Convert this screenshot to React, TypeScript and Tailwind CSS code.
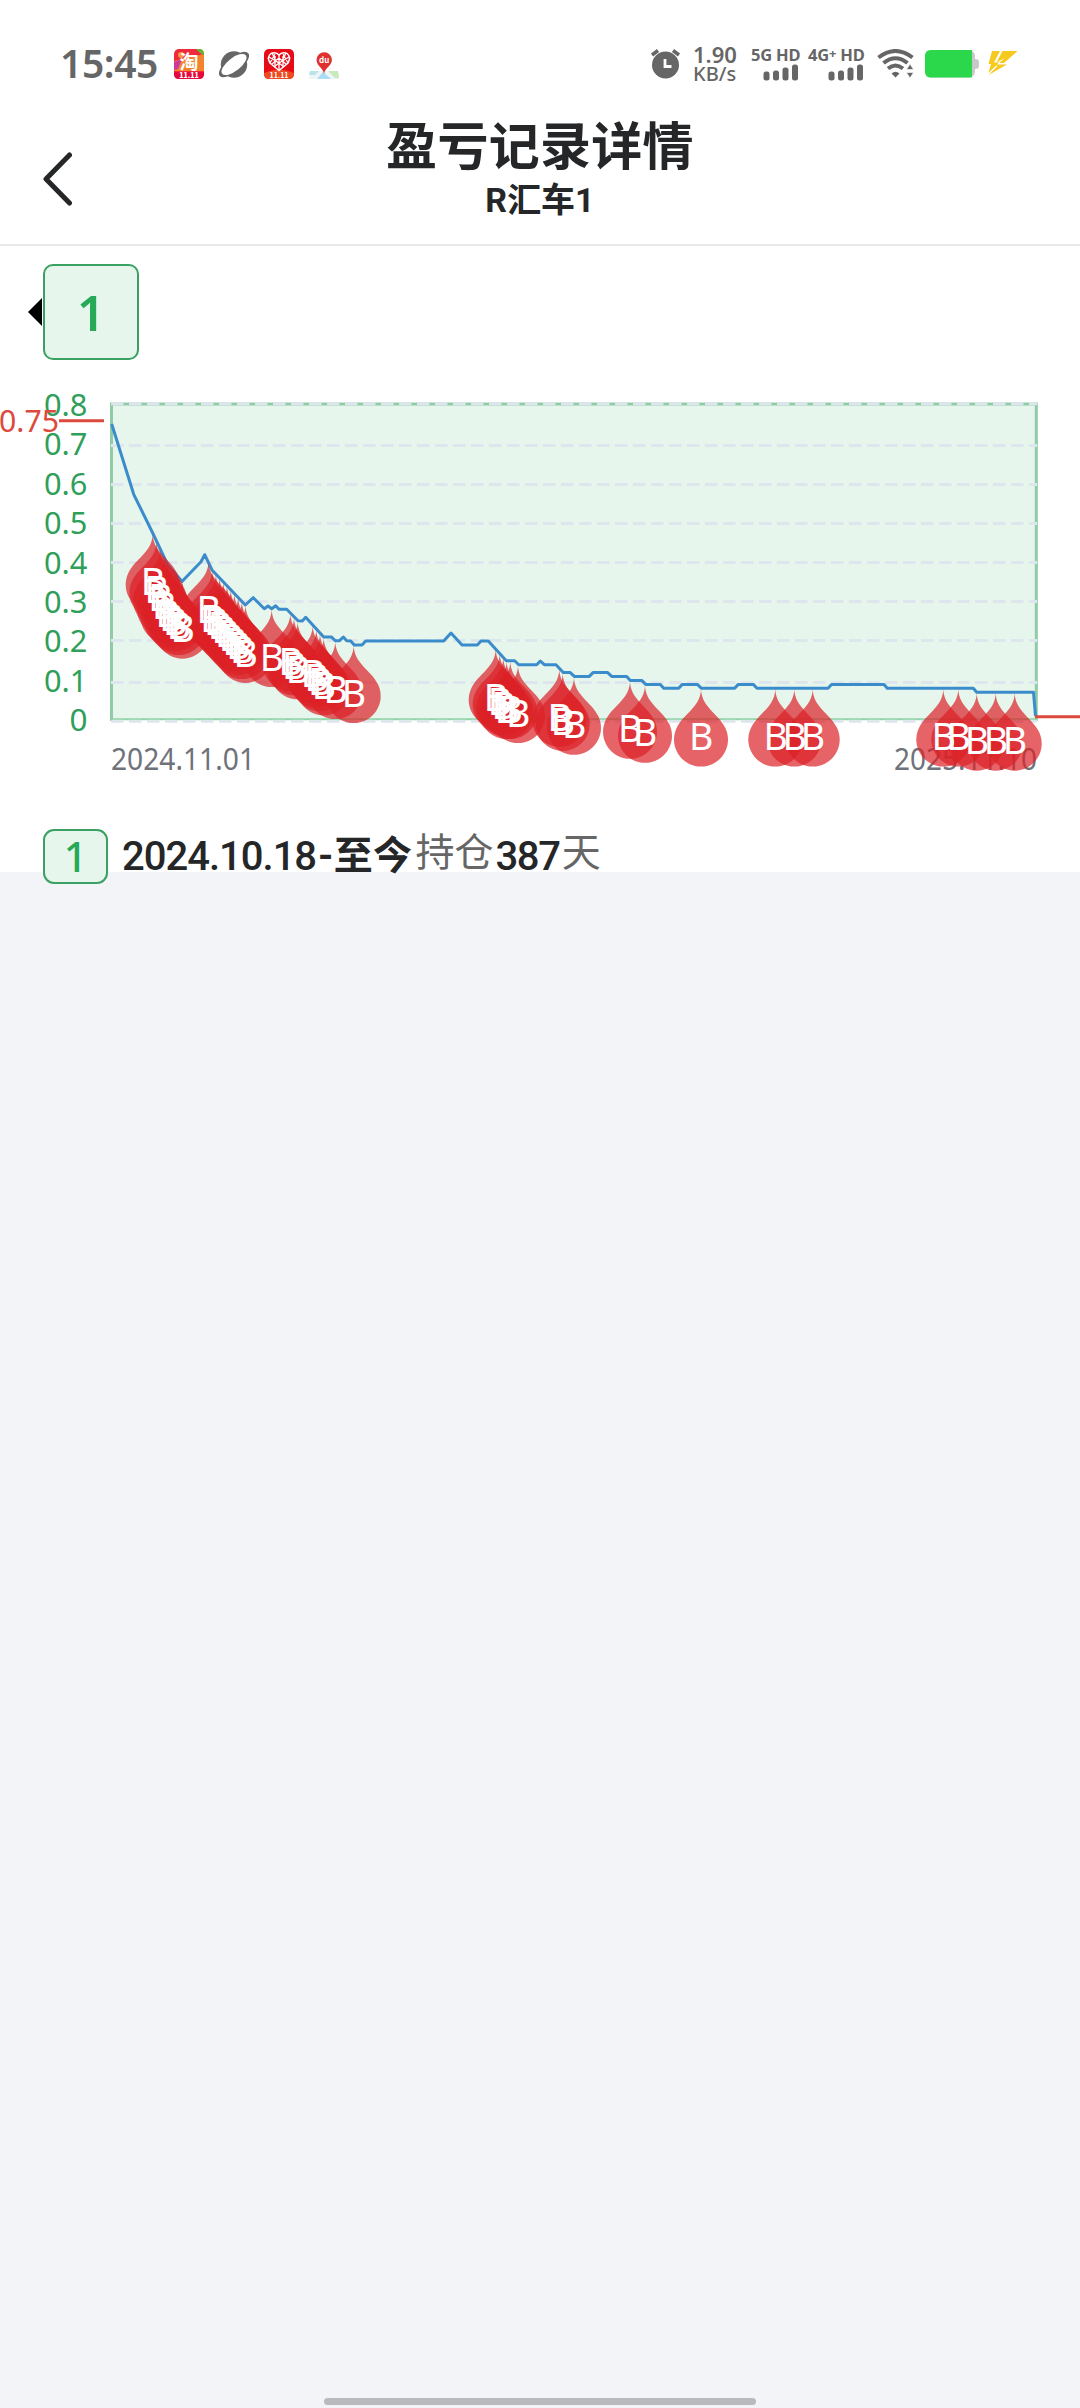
import { ReactNode } from "react";

const CJK = "font-[Roboto,'Noto_Sans_CJK_SC',sans-serif]";

// [x, y] of the net profit line
const line = [
  [111.7, 424], [133.7, 494.3], [152.7, 533], [167.5, 564.5], [182, 581.5], [201, 561.7], [204.7, 554.7],
  [212, 570], [245.3, 605], [253.3, 597.7], [264.3, 608.7], [268, 606], [271.7, 608.7], [275.7, 605.7],
  [279, 609.3], [286.7, 609.3], [298, 620.7], [302.3, 621], [305.7, 617.3], [323.7, 636.9], [331.3, 636.9],
  [335.3, 640.8], [339.3, 640.8], [343.3, 637], [346.7, 640.8], [350.7, 641], [354.3, 645], [362, 645],
  [365.7, 641], [443.7, 641], [451, 633], [462, 645], [477.3, 645], [481, 641], [488.3, 641], [506.3, 660.7],
  [514.7, 660.7], [518.7, 664.7], [536.7, 664.7], [540.3, 661], [544.3, 664.7], [556, 664.7], [563.3, 672.6],
  [570.3, 672.6], [574.3, 676.4], [589.3, 676.4], [593, 672.6], [607.7, 672.6], [611.7, 676.4], [626.7, 676.4],
  [630.3, 680.4], [641.7, 680.4], [645.7, 684.4], [660.3, 684.4], [663.7, 688.2], [678.7, 688.2], [682.3, 684.4],
  [697.3, 684.4], [701.3, 688.2], [734.7, 688.2], [738.3, 684.4], [753.3, 684.4], [757, 688.2], [828, 688.2],
  [831.5, 684.4], [884, 684.4], [887.3, 688.2], [973.3, 688.2], [976.7, 692.3], [1033.5, 692.3], [1035.5, 716],
];

// buy points, tip of every drop
const buys = [
  [152.7, 533.3], [156.4, 541.3], [160.1, 549], [163.8, 557.3], [167.5, 565], [171.2, 569], [174.9, 573], [178.6, 576.7], [182.4, 580.3],
  [208.5, 561], [212.2, 569.5], [215.9, 573.4], [219.6, 577.3], [223.3, 581.2], [227, 585.1], [230.7, 589], [234.4, 592.9], [238.1, 596.8], [241.8, 600.7], [245.5, 604.6],
  [271.7, 608.7],
  [290.3, 613], [294, 617], [297.7, 621],
  [312.7, 625], [316.3, 629], [320, 633], [323.7, 637],
  [335.3, 640.7], [353.7, 644.7],
  [495.7, 648.5], [499.7, 653], [503.3, 657], [506.7, 660.7], [510.3, 660.7], [518, 664.7],
  [559.3, 668.5], [562.7, 672.6], [574, 676.4],
  [630, 680.4], [645, 684.4], [701, 688.2],
  [775.3, 688.2], [794.3, 688.2], [812.7, 688.2],
  [943.3, 688.2], [958.3, 688.2], [976.7, 692.3], [995.7, 692.3], [1014.7, 692.3],
];

const yLabels: [string, number][] = [
  ["0.8", 415.3], ["0.7", 454.3], ["0.6", 494.3], ["0.5", 533.3], ["0.4", 573.3],
  ["0.3", 612.5], ["0.2", 651.5], ["0.1", 691.5], ["0", 730.5],
];

const gridLines = [403.8, 445.5, 484.5, 523.5, 562.5, 601.5, 640.5, 682.5, 721.3];

const DROP =
  "M-24.4 39.8A27 27 0 1 0 24.4 39.8C17.5 25.2 0 18.9 0 0C0 18.9 -17.5 25.2 -24.4 39.8Z";

function Chart() {
  return (
    <svg className="block" width="1080" height="440" viewBox="0 360 1080 440" fontFamily="'Noto Sans', sans-serif">
      <rect x="110" y="403" width="927" height="317" fill="#e6f6ed" />
      <path d="M110 404H1037" stroke="#8fcba5" strokeWidth="3" />
      <path d="M110 719.3H1037" stroke="#8fd3a6" strokeWidth="2" />
      <path d="M111.5 402.5V721M1036.3 402.5V721" stroke="#8fcba5" strokeWidth="3" />
      {gridLines.map((y) => (
        <path key={y} d={`M111 ${y}H1037`} stroke="#dde5ed" strokeWidth="3" strokeDasharray="12.5 5.5" />
      ))}
      <g fill="#2f9f5a" fontSize="31" textAnchor="end">
        {yLabels.map(([t, y]) => (
          <text key={t} x="87.5" y={y + 0.5} textLength={t === "0" ? 18 : 43.5} lengthAdjust="spacingAndGlyphs">{t}</text>
        ))}
      </g>
      <g fill="#6f727a" fontSize="31">
        <text x="111" y="769.5" textLength="144" lengthAdjust="spacingAndGlyphs">2024.11.01</text>
        <text x="894" y="769.5" textLength="143" lengthAdjust="spacingAndGlyphs">2025.11.10</text>
      </g>
      <polyline points={line.map((p) => p.join(",")).join(" ")} fill="none" stroke="#3b8ccb" strokeWidth="3" strokeLinejoin="round" />
      <text x="-1" y="431.5" fill="#dc4a3e" fontSize="31" textLength="60" lengthAdjust="spacingAndGlyphs">0.75</text>
      <path d="M59 420.8H104M1035 716.8H1080" stroke="#dc4a3e" strokeWidth="3" />
      <g fill="#dc2127" fillOpacity="0.7">
        {buys.map(([x, y], i) => (
          <path key={i} d={DROP} transform={`translate(${x} ${y})`} />
        ))}
      </g>
      {/* letters stay above all the drops */}
      <g fill="#fff" fontSize="37.5" textAnchor="middle">
        {buys.map(([x, y], i) => (
          <text key={i} x={x + 0.3} y={y + 62}>B</text>
        ))}
      </g>
    </svg>
  );
}

function AppIcon({ children }: { children: ReactNode }) {
  return (
    <svg width="30" height="30" viewBox="0 0 30 30" fontFamily="'Noto Sans CJK SC', sans-serif">
      {children}
    </svg>
  );
}

function Signal({ label, className }: { label: ReactNode; className: string }) {
  return (
    <div className={`flex flex-col h-9 ${className}`}>
      <span className="h-[17px] text-[16.5px] leading-[17px] font-bold tracking-[-0.2px] whitespace-nowrap">{label}</span>
      <svg className="self-end mr-[1px]" width="36" height="18" viewBox="0 0 36 18" fill="#666">
        <rect x="0.5" y="8.5" width="6" height="9" rx="2.5" />
        <rect x="10" y="7.5" width="6" height="10" rx="2.5" />
        <rect x="19.5" y="4.5" width="6" height="13" rx="2.5" />
        <rect x="29" y="1.5" width="6" height="16" rx="2.5" />
      </svg>
    </div>
  );
}

function StatusBar() {
  return (
    <div className="h-[110px] pt-[18px] flex items-center text-[#666] font-['Noto_Sans',sans-serif]">
      <span className="ml-[60px] w-[114px] mb-[3px] text-[39px] leading-[46px] font-semibold tracking-[-0.4px]">15:45</span>
      <div className="flex gap-[15px]">
        <AppIcon>
          <rect width="30" height="30" rx="5" fill="#ee2a3c" />
          <path d="M0 12L30 5V22H0Z" fill="#f5822c" />
          <path d="M0 13L8 10L4 20L0 21Z" fill="#c93a9a" />
          <path d="M22 0H25Q30 0 30 5V6L26 4Z" fill="#65b82e" />
          <circle cx="7" cy="6" r="3" fill="#fb9a3a" />
          <path d="M0 23H30V25Q30 30 25 30H5Q0 30 0 25Z" fill="#e5083d" />
          <text x="15" y="19.5" fontSize="19" fontWeight="700" fill="#fff" textAnchor="middle">淘</text>
          <text x="15" y="29" fontSize="7" fontWeight="900" fill="#fff" textAnchor="middle">11.11</text>
        </AppIcon>
        <AppIcon>
          <circle cx="15" cy="15.5" r="13.2" fill="#666" />
          <g transform="rotate(-38 15 15.5)">
            <ellipse cx="15" cy="15.5" rx="18.2" ry="7.500" fill="#666" />
            <ellipse cx="15" cy="15.5" rx="15" ry="6.500" fill="#fff" />
          </g>
        </AppIcon>
        <AppIcon>
          <rect width="30" height="30" rx="5" fill="#e60b17" />
          <path d="M0 24Q15 17 30 24V25Q30 30 25 30H5Q0 30 0 25Z" fill="#ee4b22" />
          <path d="M15 21.500L6 14Q2.500 8 7 4.500Q12 2.500 15 6Q18 2.500 23 4.500Q27.500 8 24 14Z" fill="#e60b17" stroke="#fff" strokeWidth="1.500" />
          <path d="M5 8L15 14L25 8M8 4L12 12M22 4L18 12M11 5L6 14M19 5L24 14M8 15L15 9L22 15M10 18L15 14L20 18M15 6V21M11 7V17M19 7V17" fill="none" stroke="#fff" strokeWidth="1.300" />
          <text x="15" y="28.500" fontSize="7" fontWeight="700" fill="#fff" textAnchor="middle">11.11</text>
        </AppIcon>
        <AppIcon>
          <path d="M1 22H29L30 30H0Z" fill="#eef5f6" />
          <path d="M1 22H10L6 26H0Z" fill="#b9e5ea" />
          <path d="M19 22H29L30 29H26Z" fill="#c7ebbd" />
          <path d="M14 23L22 30H8Z" fill="#a9dcf5" />
          <path d="M15 25.500C14.500 18.500 7.500 17 7.500 11A7.700 7.700 0 1 1 22.900 11C22.900 17 15.500 18.500 15 25.500Z" fill="#e0312f" />
          <text x="15.200" y="14" fontSize="8" fontWeight="700" fill="#fff" textAnchor="middle">du</text>
        </AppIcon>
      </div>
      <div className="ml-auto flex items-center">
        <svg width="31" height="30" viewBox="0 0 31 30">
          <circle cx="15.500" cy="16" r="13.500" fill="#666" />
          <path d="M2 6L8 1.500M29 6L23 1.500" stroke="#666" strokeWidth="3.500" />
          <path d="M15 10V17.500H21.500" fill="none" stroke="#fff" strokeWidth="2.800" />
        </svg>
        <div className="ml-[12px] w-[58px] flex flex-col">
          <span className="text-[22px] leading-[19px] font-semibold">1.90</span>
          <span className="text-[20px] leading-[19px] font-medium">KB/s</span>
        </div>
        <Signal label="5G HD" className="w-[49px]" />
        <Signal label={<>4G<sup className="text-[13px] top-[-3px]">+</sup> HD</>} className="ml-2 w-[57px]" />
        <svg className="ml-3" width="38" height="30" viewBox="0 0 38 30" fill="none" stroke="#666" strokeWidth="4">
          <path d="M1.500 8.500Q18.500 -4.500 35.500 8.500" />
          <path d="M6.500 14Q18.500 4.500 30.500 14" />
          <path d="M11 19.500Q18.500 13.500 26 19.500" />
          <path d="M14.500 24.500Q18.500 21 22.500 24.500L18.500 28.500Z" fill="#666" stroke="none" />
          <path d="M29.500 20.500L33 15L36.500 20.500ZM29.500 23.500H36.500L33 29Z" fill="#666" stroke="#fff" strokeWidth="0.600" />
        </svg>
        <svg className="ml-[10px]" width="54" height="28" viewBox="0 0 54 28">
          <rect width="50" height="27.500" rx="6" fill="#c9c9c9" />
          <path d="M50 9Q54 9 54 12V16Q54 19 50 19Z" fill="#c9c9c9" />
          <path d="M6 0H47V27.500H6Q0 27.500 0 21.500V6Q0 0 6 0Z" fill="#2bd84c" />
        </svg>
        <svg className="ml-2 mr-[61px]" width="32" height="28" viewBox="0 0 32 28">
          <path d="M5 1H13L7 12.500H12L1.500 23L4 14H1.500Z" fill="#f7c81e" />
          <path d="M15.500 1H30.500L17 13H12L18 8L9.500 12.500ZM9 14.500H20L1.500 25L10 16.500Z" fill="#f7c81e" />
        </svg>
      </div>
    </div>
  );
}

export default function App() {
  return (
    <div className={`w-[1080px] h-[2408px] flex flex-col overflow-hidden bg-[#f3f4f7] text-[#242628] ${CJK}`}>
      <div className="h-[872px] shrink-0 bg-white">
        <StatusBar />
        <header className="h-[136px] border-b-2 border-[#e8e8e8] flex">
          <div className="w-[200px] pl-[42px] pt-[42px]">
            <svg width="32" height="54" viewBox="0 0 32 54" fill="none" stroke="#242628" strokeWidth="5" strokeLinecap="round" strokeLinejoin="round">
              <path d="M27.500 3L4 27L27.500 51" />
            </svg>
          </div>
          <div className="flex-1 flex flex-col items-center pt-[11px]">
            <h1 className="text-[51px] leading-[54px] font-bold tracking-[0.3px]">盈亏记录详情</h1>
            <p className="text-[34px] leading-[40px] mt-[5px] font-bold">R汇车1</p>
          </div>
          <div className="w-[200px]" />
        </header>
        <div className="h-[114px] pt-[18px] flex items-start">
          <svg className="ml-7 mt-[34px]" width="15" height="28" viewBox="0 0 15 28">
            <path d="M0 14L14 0V28Z" fill="#000" />
          </svg>
          <div className="size-24 rounded-[10px] border-2 border-[#3aa163] bg-[#e6f6ed] flex items-center justify-center font-['Noto_Sans',sans-serif] text-[49px] leading-none font-semibold text-[#26aa58]">
            1
          </div>
        </div>
        <Chart />
        <div className="h-[84px] pt-[29px] pl-[43px] flex items-start whitespace-nowrap">
          <div className="w-[65px] h-[55px] shrink-0 rounded-[11px] border-2 border-[#3aa163] bg-[#e6f6ed] flex items-center justify-center font-['Noto_Sans',sans-serif] text-[41px] leading-none font-medium text-[#26aa58]">
            1
          </div>
          <p className="ml-[14px] text-[40px] leading-[55px] font-medium tracking-[-1px]">2024.10.18</p>
          <p className="ml-[2px] text-[39px] leading-[55px] font-bold tracking-[0.3px]">-至今</p>
          <p className="ml-[3px] text-[39px] leading-[48px] text-[#666]">持仓</p>
          <p className="ml-[2px] text-[40px] leading-[55px] font-medium tracking-[-1.300px]">387</p>
          <p className="ml-[2px] text-[39px] leading-[48px] text-[#666]">天</p>
        </div>
      </div>
      <div className="mt-auto mb-[3px] self-center w-[432px] h-[7px] rounded-full bg-[#b9babc]" />
    </div>
  );
}
